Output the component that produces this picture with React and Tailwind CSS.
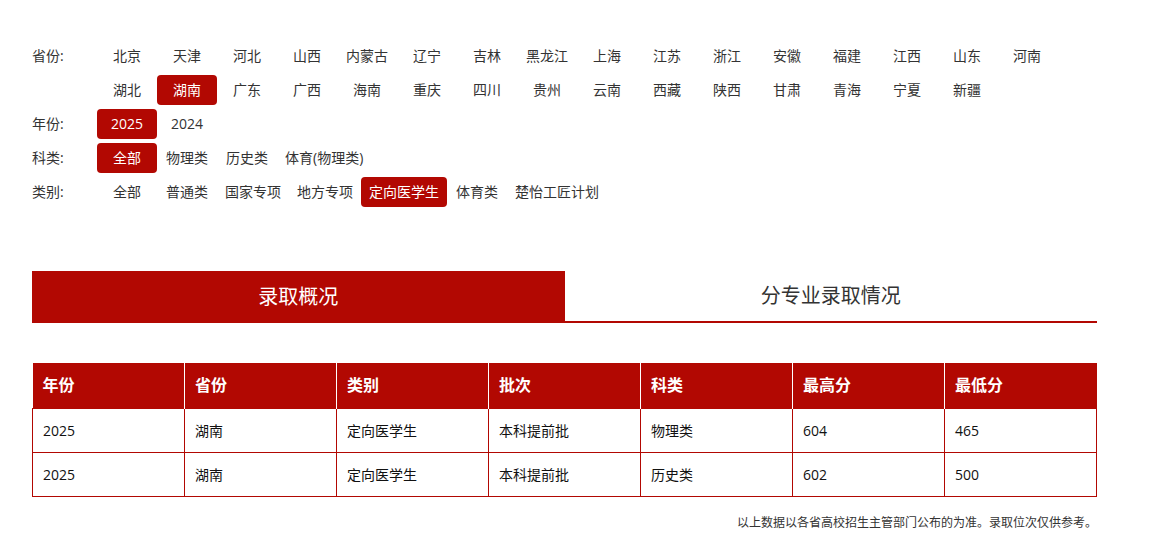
import React from "react";

const RED = "bg-[#b20802]";

const provinces = [
  "北京", "天津", "河北", "山西", "内蒙古", "辽宁", "吉林", "黑龙江", "上海", "江苏", "浙江", "安徽", "福建", "江西", "山东", "河南",
  "湖北", "湖南", "广东", "广西", "海南", "重庆", "四川", "贵州", "云南", "西藏", "陕西", "甘肃", "青海", "宁夏", "新疆",
];

const filters = [
  { label: "年份:", items: ["2025", "2024"], active: "2025", fixed: true },
  { label: "科类:", items: ["全部", "物理类", "历史类", "体育(物理类)"], active: "全部" },
  { label: "类别:", items: ["全部", "普通类", "国家专项", "地方专项", "定向医学生", "体育类", "楚怡工匠计划"], active: "定向医学生" },
];

const rows = [
  ["2025", "湖南", "定向医学生", "本科提前批", "物理类", "604", "465"],
  ["2025", "湖南", "定向医学生", "本科提前批", "历史类", "602", "500"],
];

const heads = ["年份", "省份", "类别", "批次", "科类", "最高分", "最低分"];

function Chip({ text, active, fixed }) {
  return (
    <span
      className={`h-[30px] leading-[30px] text-center rounded-[4px] cursor-pointer text-[14px] ${
        fixed ? "w-[60px]" : "min-w-[60px] px-2"
      } ${active ? `${RED} text-white` : "text-[#333]"}`}
    >
      {text}
    </span>
  );
}

function FilterRow({ label, children }) {
  return (
    <div className="flex items-start">
      <div className="w-[65px] shrink-0 h-[30px] leading-[30px] text-[14px] text-[#333]">{label}</div>
      <div className="flex flex-wrap gap-y-1 flex-1">{children}</div>
    </div>
  );
}

export default function App() {
  return (
    <div
      className="w-[1161px] h-[545px] bg-white overflow-hidden"
      style={{ fontFamily: '"Open Sans", "Noto Sans CJK SC", sans-serif' }}
    >
      <div className="ml-8 w-[1065px] pt-[41px]">
        <div className="flex flex-col gap-1">
          <FilterRow label="省份:">
            {provinces.map((p) => (
              <Chip key={p} text={p} active={p === "湖南"} fixed />
            ))}
          </FilterRow>
          {filters.map((f) => (
            <FilterRow key={f.label} label={f.label}>
              {f.items.map((it) => (
                <Chip key={it} text={it} active={it === f.active} fixed={f.fixed} />
              ))}
            </FilterRow>
          ))}
        </div>

        <div className="mt-[64px] flex h-[52px]">
          <div className={`flex-1 ${RED} text-white text-[20px] flex items-center justify-center`}>录取概况</div>
          <div className="flex-1 border-b-2 border-[#b20802] text-[#333] text-[20px] flex items-center justify-center">
            分专业录取情况
          </div>
        </div>

        <table className="mt-[40px] w-full table-fixed border-collapse">
          <thead>
            <tr className={RED}>
              {heads.map((h, i) => (
                <th
                  key={h}
                  className={`h-[45px] text-left pl-[10px] text-white text-[16px] font-bold ${
                    i < heads.length - 1 ? "border-r border-white" : ""
                  }`}
                >
                  {h}
                </th>
              ))}
            </tr>
          </thead>
          <tbody>
            {rows.map((r, ri) => (
              <tr key={ri}>
                {r.map((c, ci) => (
                  <td key={ci} className="h-[44px] pl-[10px] text-[14px] text-[#111] border border-[#b20802]">
                    {c}
                  </td>
                ))}
              </tr>
            ))}
          </tbody>
        </table>

        <p className="mt-4 text-right text-[12px] leading-[20px] text-[#333]">
          以上数据以各省高校招生主管部门公布的为准。录取位次仅供参考。
        </p>
      </div>
    </div>
  );
}
